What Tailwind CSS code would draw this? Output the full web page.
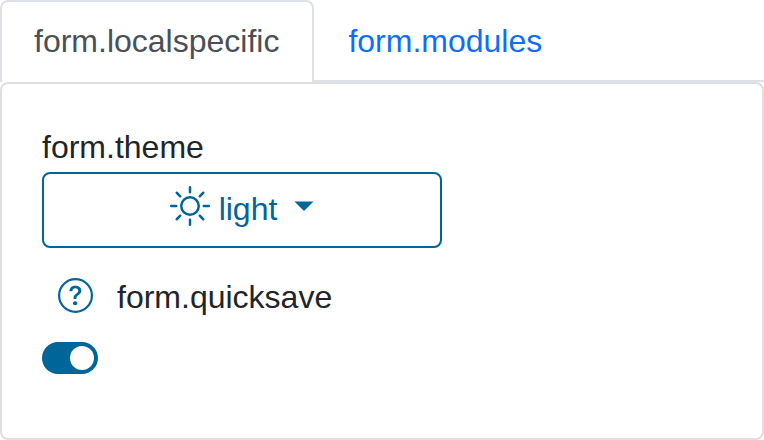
<!DOCTYPE html>
<html lang="en">
<head>
<meta charset="utf-8">
<meta name="viewport" content="width=device-width, initial-scale=1">
<title>form.localspecific</title>
<script src="https://cdn.jsdelivr.net/npm/@tailwindcss/browser@4"></script>
</head>
<body class="flex min-h-screen flex-col bg-white font-['Liberation_Sans',Arial,sans-serif] text-[32px] leading-[46px] text-[#212529]">
  <nav class="flex border-b-2 border-[#dee2e6]">
    <a href="#local" aria-current="page" class="-mb-0.5 rounded-t-lg border-2 border-b-0 border-[#dee2e6] bg-white pt-4 pr-[33px] pb-[18px] pl-8 text-[#495057]">form.localspecific</a>
    <a href="#modules" class="-mb-0.5 border-2 border-b-0 border-transparent px-8 pt-4 pb-[18px] text-[#0d6efd]">form.modules</a>
  </nav>
  <main id="local" class="flex grow flex-col items-start rounded-lg border-2 border-[#dfdfdf] p-10">
    <label for="theme" class="pb-0.5">form.theme</label>
    <button id="theme" type="button" aria-haspopup="true" class="flex w-full max-w-[400px] items-center justify-center rounded-lg border-2 border-[#006699] px-6 pt-3 pb-3.5 text-[#006699]">
      <svg class="mr-[9px] size-10 self-start" viewBox="0 0 16 16" fill="none" stroke="currentColor" stroke-linecap="round" aria-hidden="true">
        <circle cx="8" cy="8" r="3.5"/>
        <path d="M8 .5v2M8 13.5v2M.5 8h2M13.5 8h2M2.7 2.7l1.41 1.41M11.89 11.89l1.41 1.41M2.7 13.3l1.41-1.41M11.89 4.11l1.41-1.41"/>
      </svg>
      <span>light</span>
      <svg class="mb-1.5 ml-[17px] h-2.5 w-5" viewBox="0 0 20 10" fill="currentColor" aria-hidden="true"><path d="M.5 0.5h19L10 10z"/></svg>
    </button>
    <div class="mt-[26px] flex items-start">
      <button type="button" aria-label="Help" class="px-4 py-1 text-[#006699]">
        <svg class="size-[35px]" viewBox="0 0 16 16" fill="currentColor" aria-hidden="true">
          <circle cx="8" cy="8" r="7.5" fill="none" stroke="currentColor"/>
          <path d="M5.255 5.786a.237.237 0 0 0 .241.247h.825c.138 0 .248-.113.266-.25.09-.656.54-1.134 1.342-1.134.686 0 1.314.343 1.314 1.168 0 .635-.374.927-.965 1.371-.673.489-1.206 1.06-1.168 1.987l.003.217a.25.25 0 0 0 .25.246h.811a.25.25 0 0 0 .25-.25v-.105c0-.718.273-.927 1.01-1.486.609-.463 1.244-.977 1.244-2.056 0-1.511-1.276-2.241-2.673-2.241-1.267 0-2.655.59-2.75 2.286zm1.557 5.763c0 .533.425.927 1.01.927.609 0 1.028-.394 1.028-.927 0-.552-.42-.94-1.029-.94-.584 0-1.009.388-1.009.94z"/>
        </svg>
      </button>
      <label for="quicksave" class="ml-2 pb-0.5">form.quicksave</label>
    </div>
    <input id="quicksave" type="checkbox" role="switch" checked class="mt-5 flex h-8 w-14 appearance-none items-center rounded-full bg-[#adb5bd] px-1 before:size-6 before:rounded-full before:bg-white checked:justify-end checked:bg-[#006699]">
  </main>
</body>
</html>
